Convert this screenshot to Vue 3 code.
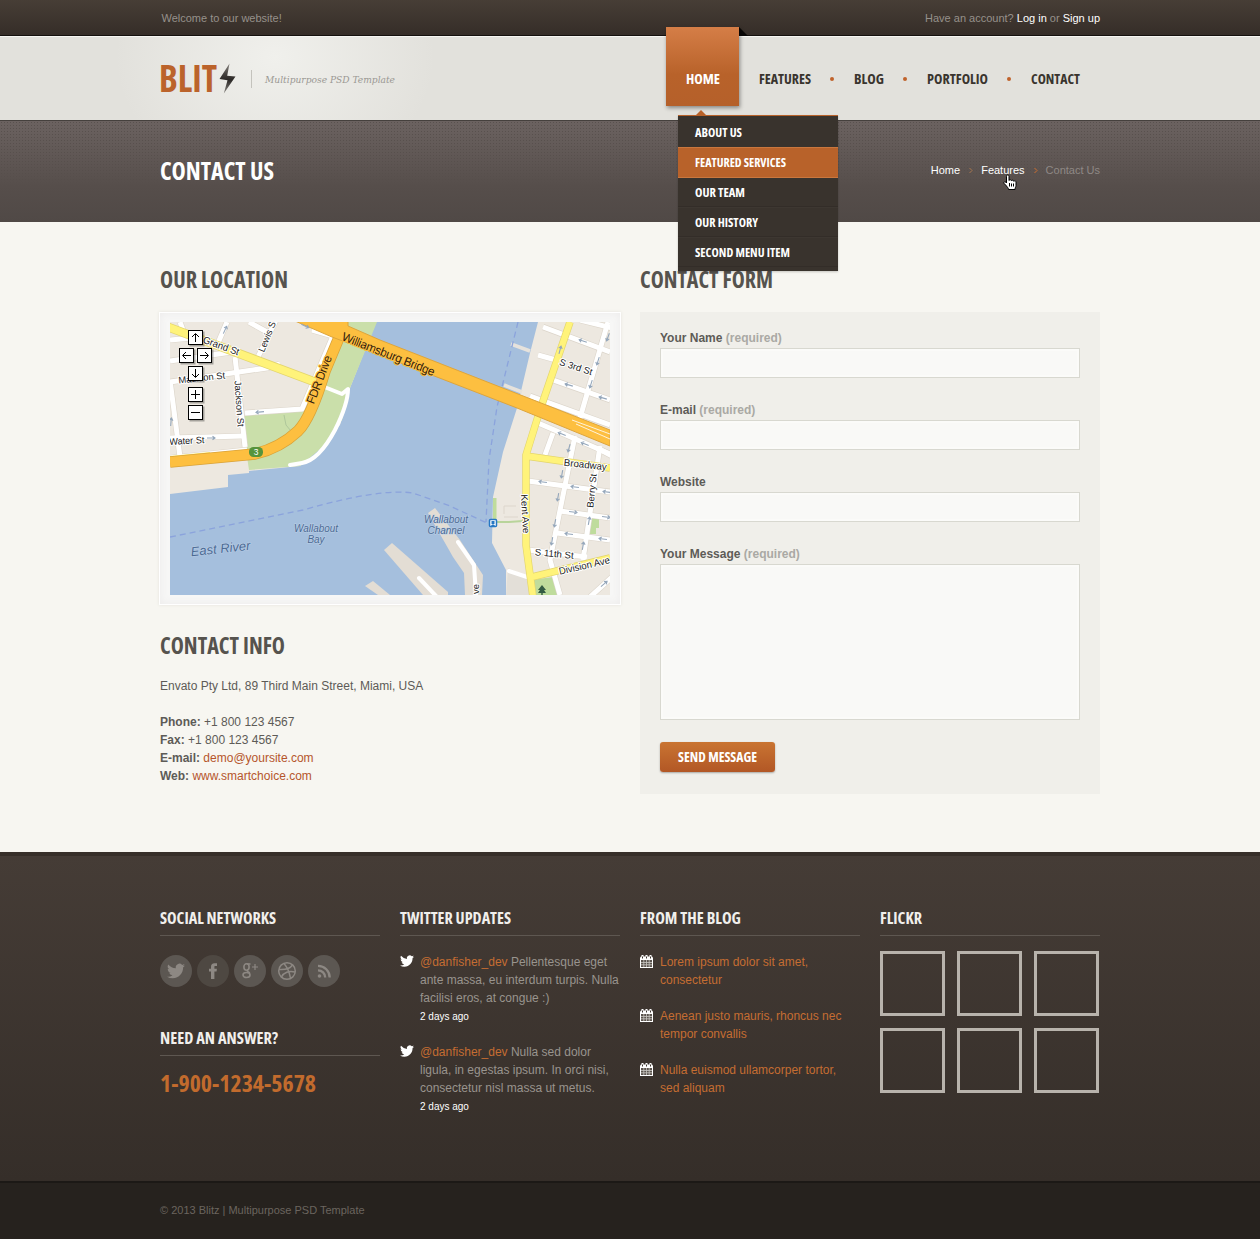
<script setup>
import { h } from 'vue'

// Condensed display text set to a fixed measure; capitals sit centred in the box.
const Fit = (props) =>
  h('svg', { width: props.w, height: props.size, style: { fontSize: props.size + 'px' } }, [
    h('text', { x: 0, y: props.size * 0.857, textLength: props.w, lengthAdjust: 'spacingAndGlyphs', fill: 'currentColor' }, props.t),
  ])
Fit.props = ['t', 'w', 'size']

const nav = [
  { t: 'FEATURES', w: 52 },
  { t: 'BLOG', w: 30 },
  { t: 'PORTFOLIO', w: 61 },
  { t: 'CONTACT', w: 49 },
]
const menu = [
  { t: 'ABOUT US', w: 47 },
  { t: 'FEATURED SERVICES', w: 91, on: true },
  { t: 'OUR TEAM', w: 50 },
  { t: 'OUR HISTORY', w: 63 },
  { t: 'SECOND MENU ITEM', w: 95 },
]
const fields = [
  { t: 'Your Name', req: true },
  { t: 'E-mail', req: true },
  { t: 'Website' },
  { t: 'Your Message', req: true, area: true },
]
const tweets = [
  'Pellentesque eget ante massa, eu interdum turpis. Nulla facilisi eros, at congue :)',
  'Nulla sed dolor ligula, in egestas ipsum. In orci nisi, consectetur nisl massa ut metus.',
]
const posts = ['Lorem ipsum dolor sit amet, consectetur', 'Aenean justo mauris, rhoncus nec tempor convallis', 'Nulla euismod ullamcorper tortor, sed aliquam']

const bird = 'M24 4.6a10 10 0 0 1-2.8.8 5 5 0 0 0 2.1-2.7 10 10 0 0 1-3.1 1.2 4.9 4.9 0 0 0-8.4 4.5A14 14 0 0 1 1.7 3.2a4.9 4.9 0 0 0 1.5 6.5 5 5 0 0 1-2.2-.6v.1a4.9 4.9 0 0 0 3.9 4.8 5 5 0 0 1-2.2.1 4.9 4.9 0 0 0 4.6 3.4A9.900 9.900 0 0 1 0 19.500a14 14 0 0 0 7.500 2.200c9 0 14-7.500 14-14v-.6A10 10 0 0 0 24 4.600z'

const streets = [
  'M170 340L192 338', 'M170 361L232 352', 'M170 382L267 368L280 364', 'M227 322L218 343', 'M249 322L267 332',
  'M276 320L258 357', 'M235 357L245 447', 'M245 413L302 409L333 336L312 330', 'M170 438L243 436', 'M170 380L180 457', 'M180 322L183 330',
  'M170 458L247 450', 'M543 327L610 352', 'M538 355L556 360', 'M553 380L610 400', 'M530 396L610 425', 'M538 423L610 454',
  'M608 322L580 418', 'M553 433L545 455', 'M575 436L550 560L560 595', 'M600 446L583 560', 'M528 481L610 492',
  'M560 511L610 518', 'M557 533L610 540', 'M528 550L587 557', 'M590 597L612 577', 'M597 448L612 456', 'M580 320L612 328',
]
const thin = ['M509 571L527 577', 'M458 542L474 565L476 595', 'M419 578L437 597']
const arrows = [
  [225, 330, -65], [305, 326, 25], [260, 412, 175], [211, 438, 0], [171, 422, -85], [583, 341, 198], [608, 337, 110], [598, 361, 108],
  [591, 384, 108], [569, 385, 196], [603, 398, 196], [562, 434, 202], [585, 444, 202], [569, 448, 105], [560, 350, -75], [562, 474, 100], [543, 482, 188],
  [575, 487, 188], [558, 497, 100], [573, 512, 8], [606, 517, 8], [555, 523, 100], [569, 534, 188], [603, 539, 188], [552, 541, 100],
  [589, 521, -80], [583, 546, -80], [604, 584, -40], [607, 492, 188],
]
const labels = [
  { t: 'Grand St', x: 220, y: 349, r: 20, w: 38, s: 10 },
  { t: 'Lewis S', x: 270, y: 338, r: -68, w: 32, s: 9.5 },
  { t: 'Madison St', x: 202, y: 381, r: -6, w: 47, s: 9.5 },
  { t: 'Jackson St', x: 236, y: 404, r: 86, w: 46, s: 9.5 },
  { t: 'Water St', x: 187, y: 444, r: -3, w: 35, s: 9.5 },
  { t: 'S 3rd St', x: 575, y: 370, r: 18, w: 34, s: 9.5 },
  { t: 'Broadway', x: 585, y: 468, r: 6, w: 43, s: 10 },
  { t: 'Kent Ave', x: 522, y: 514, r: 87, w: 39, s: 9.5 },
  { t: 'Berry St', x: 595, y: 491, r: -84, w: 34, s: 9.5 },
  { t: 'S 11th St', x: 554, y: 557, r: 5, w: 39, s: 9.5 },
  { t: 'Division Ave', x: 585, y: 569, r: -13, w: 52, s: 10 },
  { t: 've', x: 479, y: 589, r: -90, w: 10, s: 9.5 },
]
const controls = [
  [188, 330, 'M7.500 12V4M4 7l3.500-3.500L11 7'],
  [179, 348, 'M12 7.500H4M7 4L3.500 7.500L7 11'],
  [197, 348, 'M3 7.500h8M8 4l3.500 3.500L8 11'],
  [188, 366, 'M7.500 3v8M4 8l3.500 3.500L11 8'],
  [188, 387, 'M3 7.500h9M7.500 3v9'],
  [188, 405, 'M3 7.500h9'],
]
</script>

<template>
  <div class="page">
    <div class="topbar">
      <div class="wrap row">
        <span class="welcome">Welcome to our website!</span>
        <span>Have an account? <a>Log in</a> or <a>Sign up</a></span>
      </div>
    </div>

    <header class="header">
      <div class="wrap head">
        <div class="logo">
          <Fit class="cond brand" t="BLIT" :w="58" :size="37" />
          <svg class="bolt" width="17" height="32" viewBox="0 0 17 32">
            <defs><linearGradient id="bg" x1="0" y1="0" x2="0" y2="1"><stop offset="0" stop-color="#8a8783" /><stop offset=".35" stop-color="#45413e" /><stop offset=".55" stop-color="#2b2826" /><stop offset="1" stop-color="#8a8783" /></linearGradient></defs>
            <path d="M10.500 0.500L0.500 16L8.500 17.200L4.800 30.500L16.500 13.500L8.200 12.800Z" fill="url(#bg)" />
          </svg>
          <i class="sep"></i>
          <Fit class="tagline" t="Multipurpose PSD Template" :w="130" :size="10" />
        </div>
        <nav class="nav">
          <div class="home">
            <Fit class="cond" t="HOME" :w="34" :size="14" />
            <i class="fold"></i>
            <div class="drop">
              <div v-for="m in menu" :key="m.t" class="item" :class="{ on: m.on }"><Fit class="cond" :t="m.t" :w="m.w" :size="12.500" /></div>
            </div>
          </div>
          <template v-for="(n, i) in nav" :key="n.t">
            <i v-if="i" class="dot"></i>
            <Fit class="cond" :t="n.t" :w="n.w" :size="14" />
          </template>
        </nav>
      </div>
    </header>

    <section class="title">
      <div class="wrap row">
        <Fit class="cond name" t="CONTACT US" :w="114" :size="24" />
        <div class="crumbs">
          <a>Home</a>
          <svg width="4" height="7" viewBox="0 0 4 7"><path d="M.5 1L3 3.500L.5 6" fill="none" stroke="#a9774f" /></svg>
          <a class="hover">Features
            <svg class="cursor" width="15" height="17" viewBox="0 0 15 17"><path d="M4.500 1c1 0 1.500.5 1.500 1.500v4c0-1 2.500-1 2.500.3 0-.9 2.300-.8 2.300.5 0-.8 2.200-.6 2.200.8v3.400c0 1.500-1 2-1 4H5.500c0-1.500-1-2-2-3.500L1 9.300c-.7-1.500 1-2 2-1L3.500 9V2.500c0-1 .3-1.500 1-1.500z" fill="#fff" stroke="#000" /><path d="M6.500 9v3.500M8.500 9.500v3M10.500 9.500v3" stroke="#000" /></svg>
          </a>
          <svg width="4" height="7" viewBox="0 0 4 7"><path d="M.5 1L3 3.500L.5 6" fill="none" stroke="#d0702f" /></svg>
          <span>Contact Us</span>
        </div>
      </div>
    </section>

    <main class="main">
      <div class="wrap cols">
        <div class="left">
          <Fit class="cond h2" t="OUR LOCATION" :w="128" :size="22.500" />
          <div class="frame">
            <svg class="map" width="440" height="273" viewBox="170 322 440 273">
              <rect x="170" y="322" width="440" height="273" fill="#a5bfdd" />
              <path d="M170 322H376L350 388L340 425L300 466L249 471V473L228 475V487L170 494Z" fill="#ede8e0" />
              <path d="M347 322H377L350 388L342 420L325 445L300 466L249 470L246 450L243 416L302 410L340 332Z" fill="#cadfaa" />
              <path d="M538 322L530 353L522 387L517 408L503 452L493 497L492 543L506 570V595H610V322Z" fill="#ede8e0" />
              <path d="M508 568L528 577L533 595H506Z" fill="#e3dfd8" />
              <path d="M428 513L435 508L460 540L483 575L482 595H465L464 573L453 557Z" fill="#e3ddd4" />
              <path d="M392 543L448 592V595H423L384 550Z" fill="#e3ddd4" />
              <path d="M373 581L390 595H378L365 586Z" fill="#e3ddd4" />
              <path d="M511 344L530 351M504 385L522 392" stroke="#e6e2dc" stroke-width="3.500" />
              <path d="M590 518h9v10h-3v6h-6zM493 498h3.500v24h-3.500zM531 580L553 577L558 595H534Z" fill="#bfdc9c" />
              <path d="M284 415l2 10 10 12M300 425l8-8 4-12" fill="none" stroke="#afc79b" />
              <path d="M497 522h12l14-1" fill="none" stroke="#b9d49b" stroke-width="2" />
              <path d="M504 514v-8h12M504 517h14" fill="none" stroke="#ddd6cc" />
              <path d="M170 537L303 510Q380 488 413 493L450 506L487 523M518 322L497 407L489 460L486 522" fill="none" stroke="#8ba3dc" stroke-width="1.300" stroke-dasharray="6 4" />
              <g fill="none" stroke-linejoin="round">
                <path v-for="s in streets" :key="'o' + s" :d="s" stroke="#dcd5ca" stroke-width="6.200" />
                <path v-for="s in streets" :key="s" :d="s" stroke="#fff" stroke-width="5" />
                <path v-for="s in thin" :key="s" :d="s" stroke="#fff" stroke-width="4" stroke-linecap="round" />
                <path d="M322 386L342 394L348 389Q348 404 335 430Q319 460 302 463L290 465" stroke="#fff" stroke-width="4" stroke-linecap="round" />
                <path d="M570 322L540 410L526 455V545L533 597M526 456L610 468M528 578L610 558" stroke="#e3d56d" stroke-width="7.500" />
                <path d="M570 322L540 410L526 455V545L533 597M526 456L610 468M528 578L610 558" stroke="#fff37a" stroke-width="6.200" />
                <path d="M168 327L315 382" stroke="#e3d56d" stroke-width="9" />
                <path d="M168 327L315 382" stroke="#fff37a" stroke-width="7.500" />
                <path d="M170 457L210 453" stroke="#fff37a" stroke-width="2" />
                <path d="M343 328L325 371Q311 418 298 431Q280 448 255 454L170 462" stroke="#d9a238" stroke-width="11.500" />
                <path d="M343 328L325 371Q311 418 298 431Q280 448 255 454L170 462" stroke="#fdbf40" stroke-width="10" />
              </g>
              <path d="M295 321H348V326L380 340L610 430V446L517 408L380 355L332 337Z" fill="#fdbf40" stroke="#dda53d" />
              <path d="M572 420L610 434M576 424L610 439" stroke="#fff" stroke-width=".8" />
              <g v-for="(a, i) in arrows" :key="'a' + i" :transform="`translate(${a[0]} ${a[1]}) rotate(${a[2]})`"><path d="M-4 0H4M1.500 -1.800L4 0L1.500 1.800" fill="none" stroke="#95a7bb" stroke-width="1.100" /></g>
              <g class="lab">
                <g v-for="l in labels" :key="l.t" :transform="`translate(${l.x} ${l.y}) rotate(${l.r})`"><text :textLength="l.w" lengthAdjust="spacingAndGlyphs" :font-size="l.s">{{ l.t }}</text></g>
              </g>
              <g class="big">
                <g transform="translate(387 358) rotate(21.500)"><text textLength="99" font-size="12">Williamsburg Bridge</text></g>
                <g transform="translate(323 381) rotate(-69)"><text textLength="51" font-size="12">FDR Drive</text></g>
              </g>
              <g class="water">
                <g transform="translate(221 553) rotate(-6)"><text textLength="60" font-size="13">East River</text></g>
                <text x="316" y="532" textLength="44" font-size="10">Wallabout</text><text x="316" y="543" textLength="17" font-size="10">Bay</text>
                <text x="446" y="523" textLength="44" font-size="10">Wallabout</text><text x="446" y="534" textLength="37" font-size="10">Channel</text>
              </g>
              <rect x="249" y="447" width="14" height="10" rx="4.500" fill="#56943c" /><text x="256" y="455" font-size="8.500" fill="#fff" text-anchor="middle">3</text>
              <rect x="489.500" y="519.500" width="7" height="7" rx="1" fill="#fff" stroke="#2677c4" stroke-width="1.500" /><path d="M491.500 521h3v3h-3zM491 526l1-1.500h2l1 1.500z" fill="#2677c4" />
              <path d="M542 585l4 5h-2l2 3h-3.300v2h-1.400v-2H538l2-3h-2z" fill="#345c43" />
              <g v-for="(c, i) in controls" :key="'c' + i" :transform="`translate(${c[0]} ${c[1]})`">
                <rect x="1.500" y="1.500" width="15" height="15" fill="#000" opacity=".3" />
                <rect x=".5" y=".5" width="14" height="14" fill="#fff" stroke="#000" /><path :d="c[2]" fill="none" stroke="#000" />
              </g>
            </svg>
          </div>
          <Fit class="cond h2 info" t="CONTACT INFO" :w="125" :size="22.500" />
          <p>Envato Pty Ltd, 89 Third Main Street, Miami, USA</p>
          <p class="lines"><b>Phone:</b> +1 800 123 4567<br /><b>Fax:</b> +1 800 123 4567<br /><b>E-mail:</b> <a>demo@yoursite.com</a><br /><b>Web:</b> <a>www.smartchoice.com</a></p>
        </div>
        <div class="right">
          <Fit class="cond h2" t="CONTACT FORM" :w="133" :size="22.500" />
          <form class="form" @submit.prevent>
            <label v-for="f in fields" :key="f.t"><span>{{ f.t }} <em v-if="f.req">(required)</em></span><textarea v-if="f.area"></textarea><input v-else type="text" /></label>
            <button><Fit class="cond" t="SEND MESSAGE" :w="79" :size="14" /></button>
          </form>
        </div>
      </div>
    </main>

    <footer class="footer">
      <div class="wrap fcols">
        <div>
          <div class="h3"><Fit class="cond" t="SOCIAL NETWORKS" :w="116" :size="16" /></div>
          <div class="social">
            <i><svg width="18" height="18" viewBox="0 0 24 24"><path :d="bird" /></svg></i>
            <i class="dim"><svg width="18" height="18" viewBox="0 0 18 18"><path d="M7 17V9.500H5V6.700h2V5c0-2.500 1.200-3.700 3.500-3.700H13V4h-1.500C10.500 4 10.400 4.400 10.400 5v1.700h2.500l-.3 2.800h-2.200V17z" /></svg></i>
            <i><svg width="18" height="18" viewBox="0 0 18 18"><g fill="none" stroke="#8d8883"><ellipse cx="5.500" cy="5" rx="2.600" ry="3.200" stroke-width="1.600" /><path d="M6 2h3.500M7 8c-2 1 .8 2 1.800 3" stroke-width="1.500" /><ellipse cx="5.500" cy="13" rx="3.500" ry="2.500" stroke-width="1.600" /><path d="M11 5h6M14 2v6" stroke-width="1.200" /></g></svg></i>
            <i><svg width="20" height="20" viewBox="0 0 20 20"><g fill="none" stroke="#8d8883" stroke-width="1.500"><circle cx="10" cy="10" r="8.300" /><path d="M7 2.500C10 6 12.500 11 13.500 17.500M2 8.500C8 9 13 7.500 15.500 4M4.500 16C6.500 11.500 12 9.500 18 11" /></g></svg></i>
            <i><svg width="18" height="18" viewBox="0 0 18 18"><circle cx="4.500" cy="14" r="1.800" /><path d="M3 8.300a7.200 7.200 0 0 1 7.200 7.200M3 3.800a11.700 11.700 0 0 1 11.700 11.700" fill="none" stroke="#8d8883" stroke-width="2.300" /></svg></i>
          </div>
          <div class="h3"><Fit class="cond" t="NEED AN ANSWER?" :w="118" :size="16" /></div>
          <Fit class="cond phone" t="1-900-1234-5678" :w="156" :size="23.500" />
        </div>
        <div>
          <div class="h3"><Fit class="cond" t="TWITTER UPDATES" :w="111" :size="16" /></div>
          <div v-for="t in tweets" :key="t" class="entry tweet">
            <svg width="14" height="14" viewBox="0 0 24 24"><path :d="bird" fill="#fff" /></svg>
            <div><a>@danfisher_dev</a> {{ t }}<small>2 days ago</small></div>
          </div>
        </div>
        <div>
          <div class="h3"><Fit class="cond" t="FROM THE BLOG" :w="101" :size="16" /></div>
          <div v-for="p in posts" :key="p" class="entry post">
            <svg width="13" height="14" viewBox="0 0 13 14"><path d="M1 1.500h11l1 1V13H0V2.500z" fill="#fff" /><path d="M1 5h11v7H1z" fill="#5b544e" /><path d="M1 7.500h11M1 9.800h11M3.800 5v7M6.500 5v7M9.200 5v7" stroke="#c9c6c2" stroke-width=".8" /><path d="M2.500 0v3M6.500 0v3M10.500 0v3" stroke="#fff" stroke-width="2" /><path d="M2.500 1.500v2M6.500 1.500v2M10.500 1.500v2" stroke="#3d352f" /></svg>
            <a>{{ p }}</a>
          </div>
        </div>
        <div>
          <div class="h3"><Fit class="cond" t="FLICKR" :w="42" :size="16" /></div>
          <div class="flickr"><i v-for="n in 6" :key="n"></i></div>
        </div>
      </div>
    </footer>
    <div class="copy"><div class="wrap">© 2013 Blitz | Multipurpose PSD Template</div></div>
  </div>
</template>

<style>
body { margin: 0; background: #f7f6f1; }
</style>

<style scoped>
.page { width: 1260px; font: 12px/18px "Liberation Sans", Arial, sans-serif; color: #5d5b57; }
.wrap { width: 940px; margin: 0 auto; }
.row { display: flex; justify-content: space-between; align-items: center; height: 100%; }
svg { display: block; flex: none; overflow: visible; }
.cond { font-family: "Open Sans", sans-serif; font-weight: 700; font-stretch: 75%; }
.topbar { box-sizing: border-box; height: 36px; border-bottom: 1px solid #15110e; background: linear-gradient(#473e36, #352d28); font-size: 11px; color: #96918b; }
.topbar a { color: #fff; }
.welcome { padding-left: 1.5px; }
.header { height: 84px; background: radial-gradient(ellipse 160px 130px at 275px 20px, #f0f0ec, rgba(226, 225, 220, 0)), #e2e1dc; border-top: 1px solid #f6f6f3; box-sizing: border-box; }
.head { display: flex; justify-content: space-between; }
.logo { display: flex; align-items: center; height: 83px; }
.brand { color: #bb632b; margin-left: -1px; }
.bolt { margin-left: 2px; }
.sep { width: 1px; height: 18px; margin: 0 13px 0 15px; background: #c4c3bd; }
.tagline { font-family: "DejaVu Serif", serif; font-style: italic; color: #9a9893; }
.nav { display: flex; align-items: center; height: 84px; padding-right: 20px; color: #39342e; }
.home { position: relative; z-index: 3; width: 73px; height: 79px; margin: -25px 20px 0 0; box-sizing: border-box; padding: 45px 0 0 20px; color: #fff; background: linear-gradient(#d57e47, #b8622a 60%, #b5602a); box-shadow: 1px 2px 4px rgba(0, 0, 0, .4); }
.fold { position: absolute; left: 73px; top: 0; width: 9px; height: 9px; background: #080605; clip-path: polygon(0 0, 100% 100%, 0 100%); }
.dot { width: 4px; height: 4px; border-radius: 50%; background: #c0622b; margin: 0 20px 0 19px; }
.drop { position: absolute; left: 12px; top: 88px; width: 160px; height: 156px; box-sizing: border-box; border-top: 1px solid #b8622a; background: #39332d; box-shadow: 0 1px 2px rgba(0, 0, 0, .2); }
.drop::before { content: ""; position: absolute; left: 18px; top: -6px; border: solid transparent; border-width: 0 5px 5px; border-bottom-color: #b8622a; }
.item { height: 30px; padding: 0 17px; display: flex; align-items: center; box-sizing: border-box; border-top: 1px solid #3d3731; border-bottom: 1px solid #332d28; }
.item:first-child { height: 31px; border: 0; padding-top: 1px; }
.item.on { height: 31px; margin-bottom: -1px; background: #b8622a; border-color: #c9773e; position: relative; }
.title { box-sizing: border-box; height: 102px; border-top: 1px solid #45403d; color: #fff; background: linear-gradient(rgba(86, 78, 75, 0), #564e4b 65%, #504946), radial-gradient(circle, #59514e .7px, transparent 1px) 0 0 / 3px 3px, #6b6260; }
.name { margin-top: -1px; }
.crumbs { display: flex; align-items: center; gap: 9px; font-size: 11px; height: 18px; margin-top: -4px; }
.crumbs svg { margin: 1px 0 0 0; }
.crumbs span { color: #8f8986; margin-left: -1px; }
.hover { position: relative; margin-left: -1px; }
.crumbs .cursor { position: absolute; left: 22px; top: 12px; z-index: 4; }
.main { height: 630px; box-sizing: border-box; padding-top: 47px; background: #f7f6f1; }
.cols { display: flex; }
.left { width: 480px; }
.right { width: 460px; }
.h2 { color: #56534e; }
.frame { width: 440px; height: 273px; margin: 21px 0 0; padding: 9px 10px; background: #f7f7f6; box-shadow: inset 0 0 8px #ecebeb, 0 0 0 1px #fff, 0 0 3px 1px #e4e3dd; }
.map { overflow: hidden; }
.lab text, .big text { text-anchor: middle; fill: #222; paint-order: stroke; stroke: #fff; stroke-width: 2px; stroke-linejoin: round; }
.big text { fill: #33210d; stroke: #fdbf40; }
.water text { text-anchor: middle; font-style: italic; fill: #4b6a94; paint-order: stroke; stroke: #bdd0e7; stroke-width: 1px; }
.info { margin-top: 31px; }
p { margin: 20px 0 0; }
p.lines { margin-top: 18px; }
p a { color: #b5552b; }
.form { margin-top: 20px; box-sizing: border-box; width: 460px; height: 482px; padding: 17px 20px; background: #f0efea; }
label { display: flex; flex-direction: column; font-weight: 700; margin-bottom: 23px; }
label span { line-height: 18px; margin-bottom: 1px; }
em { font-style: normal; color: #aaa9a4; }
input, textarea { display: block; box-sizing: border-box; width: 420px; height: 30px; margin: 0; border: 1px solid #d8d8d0; background: #f9f9f7; padding: 0; resize: none; box-shadow: inset 0 0 0 2px #fbfbf9; }
textarea { height: 156px; }
button { display: flex; align-items: center; width: 115px; height: 30px; margin-top: -1px; padding: 0 18px; border: 0; border-radius: 3px; color: #fff; background: linear-gradient(#c97432, #b25725); box-shadow: 0 1px 2px rgba(0, 0, 0, .3); }
.footer { box-sizing: border-box; height: 329px; border-top: 4px solid #372f29; background: linear-gradient(#453c36, #352e29); padding-top: 54px; color: #99948e; }
.fcols { display: flex; gap: 20px; }
.fcols > div { width: 220px; }
.h3 { height: 25px; border-bottom: 1px solid #5e5751; color: #f1efec; }
.social { display: flex; gap: 5px; margin: 19px 0 43px; }
.social i { width: 32px; height: 32px; border-radius: 50%; background: #5c5752; display: flex; align-items: center; justify-content: center; fill: #8d8883; }
.social .dim { background: #4e4842; }
.phone { margin-top: 16px; color: #c26b2d; }
.entry { display: flex; gap: 6px; margin-top: 17px; }
.entry a { color: #c56d32; }
.tweet svg { margin-top: 1px; }
.tweet + .tweet { margin-top: 17px; }
small { display: block; font-size: 10px; line-height: 18px; padding-top: 1px; color: #fff; }
.post { width: 208px; }
.post svg { margin: 2px 1px 0 0; }
.post a { width: 184px; }
.post + .post { margin-top: 18px; }
.flickr { display: flex; flex-wrap: wrap; gap: 12px; margin-top: 15px; }
.flickr i { box-sizing: border-box; width: 65px; height: 65px; border: 3px solid #b8b3ac; }
.copy { box-sizing: border-box; height: 58px; border-top: 2px solid #1c1916; background: #26221e; color: #6b655f; font-size: 11px; line-height: 54px; }
</style>
